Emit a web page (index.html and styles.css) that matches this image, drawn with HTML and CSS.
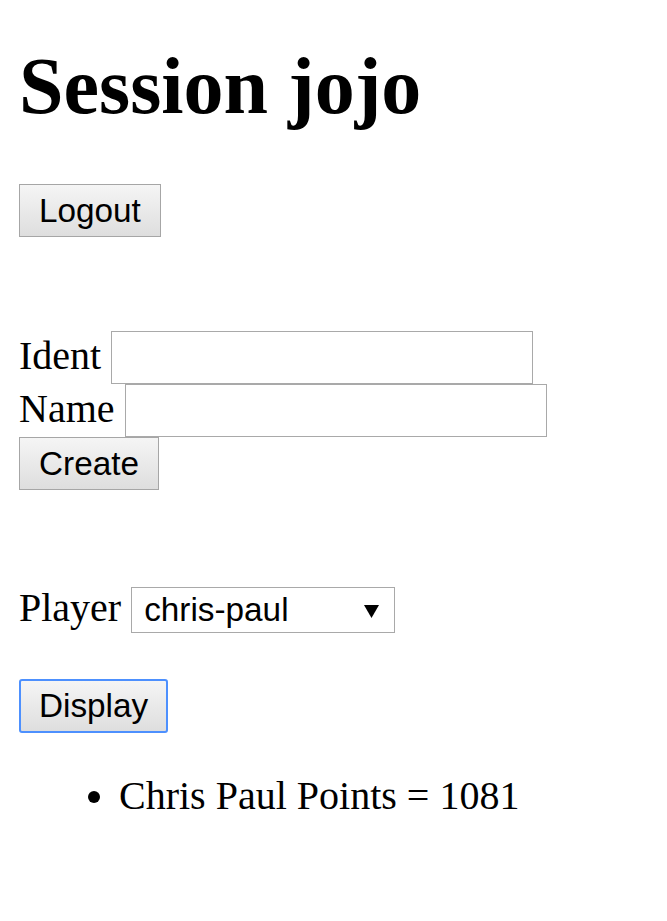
FILE: index.html
```html
<!DOCTYPE html>
<html>
<head>
<meta charset="utf-8">
<title>Session jojo</title>
<link rel="stylesheet" href="styles.css">
</head>
<body>
<main class="page">
  <h1 class="title">Session jojo</h1>
  <form class="logout-form">
    <button type="button" class="btn">Logout</button>
  </form>
  <form class="create-form">
    <div class="row"><span class="label">Ident</span><input class="field" type="text"></div>
    <div class="row"><span class="label">Name</span><input class="field" type="text"></div>
    <div class="row"><button type="button" class="btn">Create</button></div>
  </form>
  <form class="player-form">
    <div class="row row-select">
      <span class="label">Player</span>
      <div class="select">
        <span class="select-value">chris-paul</span>
        <svg class="select-arrow" width="15" height="13" viewBox="0 0 15 13"><polygon points="0,0 15,0 7.5,13" fill="#000"/></svg>
      </div>
    </div>
    <div class="display-wrap"><button type="button" class="btn btn-focus">Display</button></div>
  </form>
  <ul class="results">
    <li>Chris Paul Points = 1081</li>
  </ul>
</main>
</body>
</html>
```

FILE: styles.css
```css
html, body {
  margin: 0;
  padding: 0;
  background: #fff;
}
.page {
  padding: 40px 19px 0 19px;
  font-family: "Liberation Serif", "Times New Roman", serif;
  font-size: 40px;
  color: #000;
}
.title {
  margin: 0;
  font-size: 80px;
  font-weight: bold;
  line-height: 92px;
  height: 92px;
}
.logout-form {
  margin-top: 52px;
  height: 53px;
  display: flex;
}
.btn {
  box-sizing: border-box;
  height: 53px;
  margin: 0;
  padding: 0 19px;
  font-family: "Liberation Sans", Arial, sans-serif;
  font-size: 33.3px;
  color: #000;
  border: 1px solid #a6a6a6;
  border-radius: 0;
  background: linear-gradient(#f5f5f5, #dedede);
  line-height: 1;
}
.btn-focus {
  height: 54px;
  padding: 0 18px;
  border: 2px solid #4d90fe;
  border-radius: 3px;
}
.create-form {
  margin-top: 94px;
}
.row {
  display: flex;
  align-items: baseline;
  height: 53px;
}
.label {
  line-height: 46px;
}
.field {
  box-sizing: border-box;
  width: 422px;
  height: 53px;
  margin: 0 0 0 10px;
  padding: 0 5px;
  border: 1px solid #a9a9a9;
  background: #fff;
  font-family: "Liberation Sans", Arial, sans-serif;
  font-size: 33.3px;
  line-height: 1;
}
.player-form {
  margin-top: 95px;
}
.row-select {
  height: 48px;
}
.select {
  box-sizing: border-box;
  width: 264px;
  height: 46px;
  margin-left: 10px;
  border: 1px solid #a9a9a9;
  background: #fff;
  display: flex;
  align-items: baseline;
  padding: 0 15px 0 12px;
  font-family: "Liberation Sans", Arial, sans-serif;
  font-size: 33.3px;
  line-height: 44px;
}
.select-value {
  flex: 1;
}
.select-arrow {
  align-self: center;
  margin-top: 2px;
}
.display-wrap {
  margin-top: 46px;
  height: 54px;
  display: flex;
}
.results {
  margin: 40px 0 0 0;
  padding-left: 100px;
  line-height: 46px;
}
```
